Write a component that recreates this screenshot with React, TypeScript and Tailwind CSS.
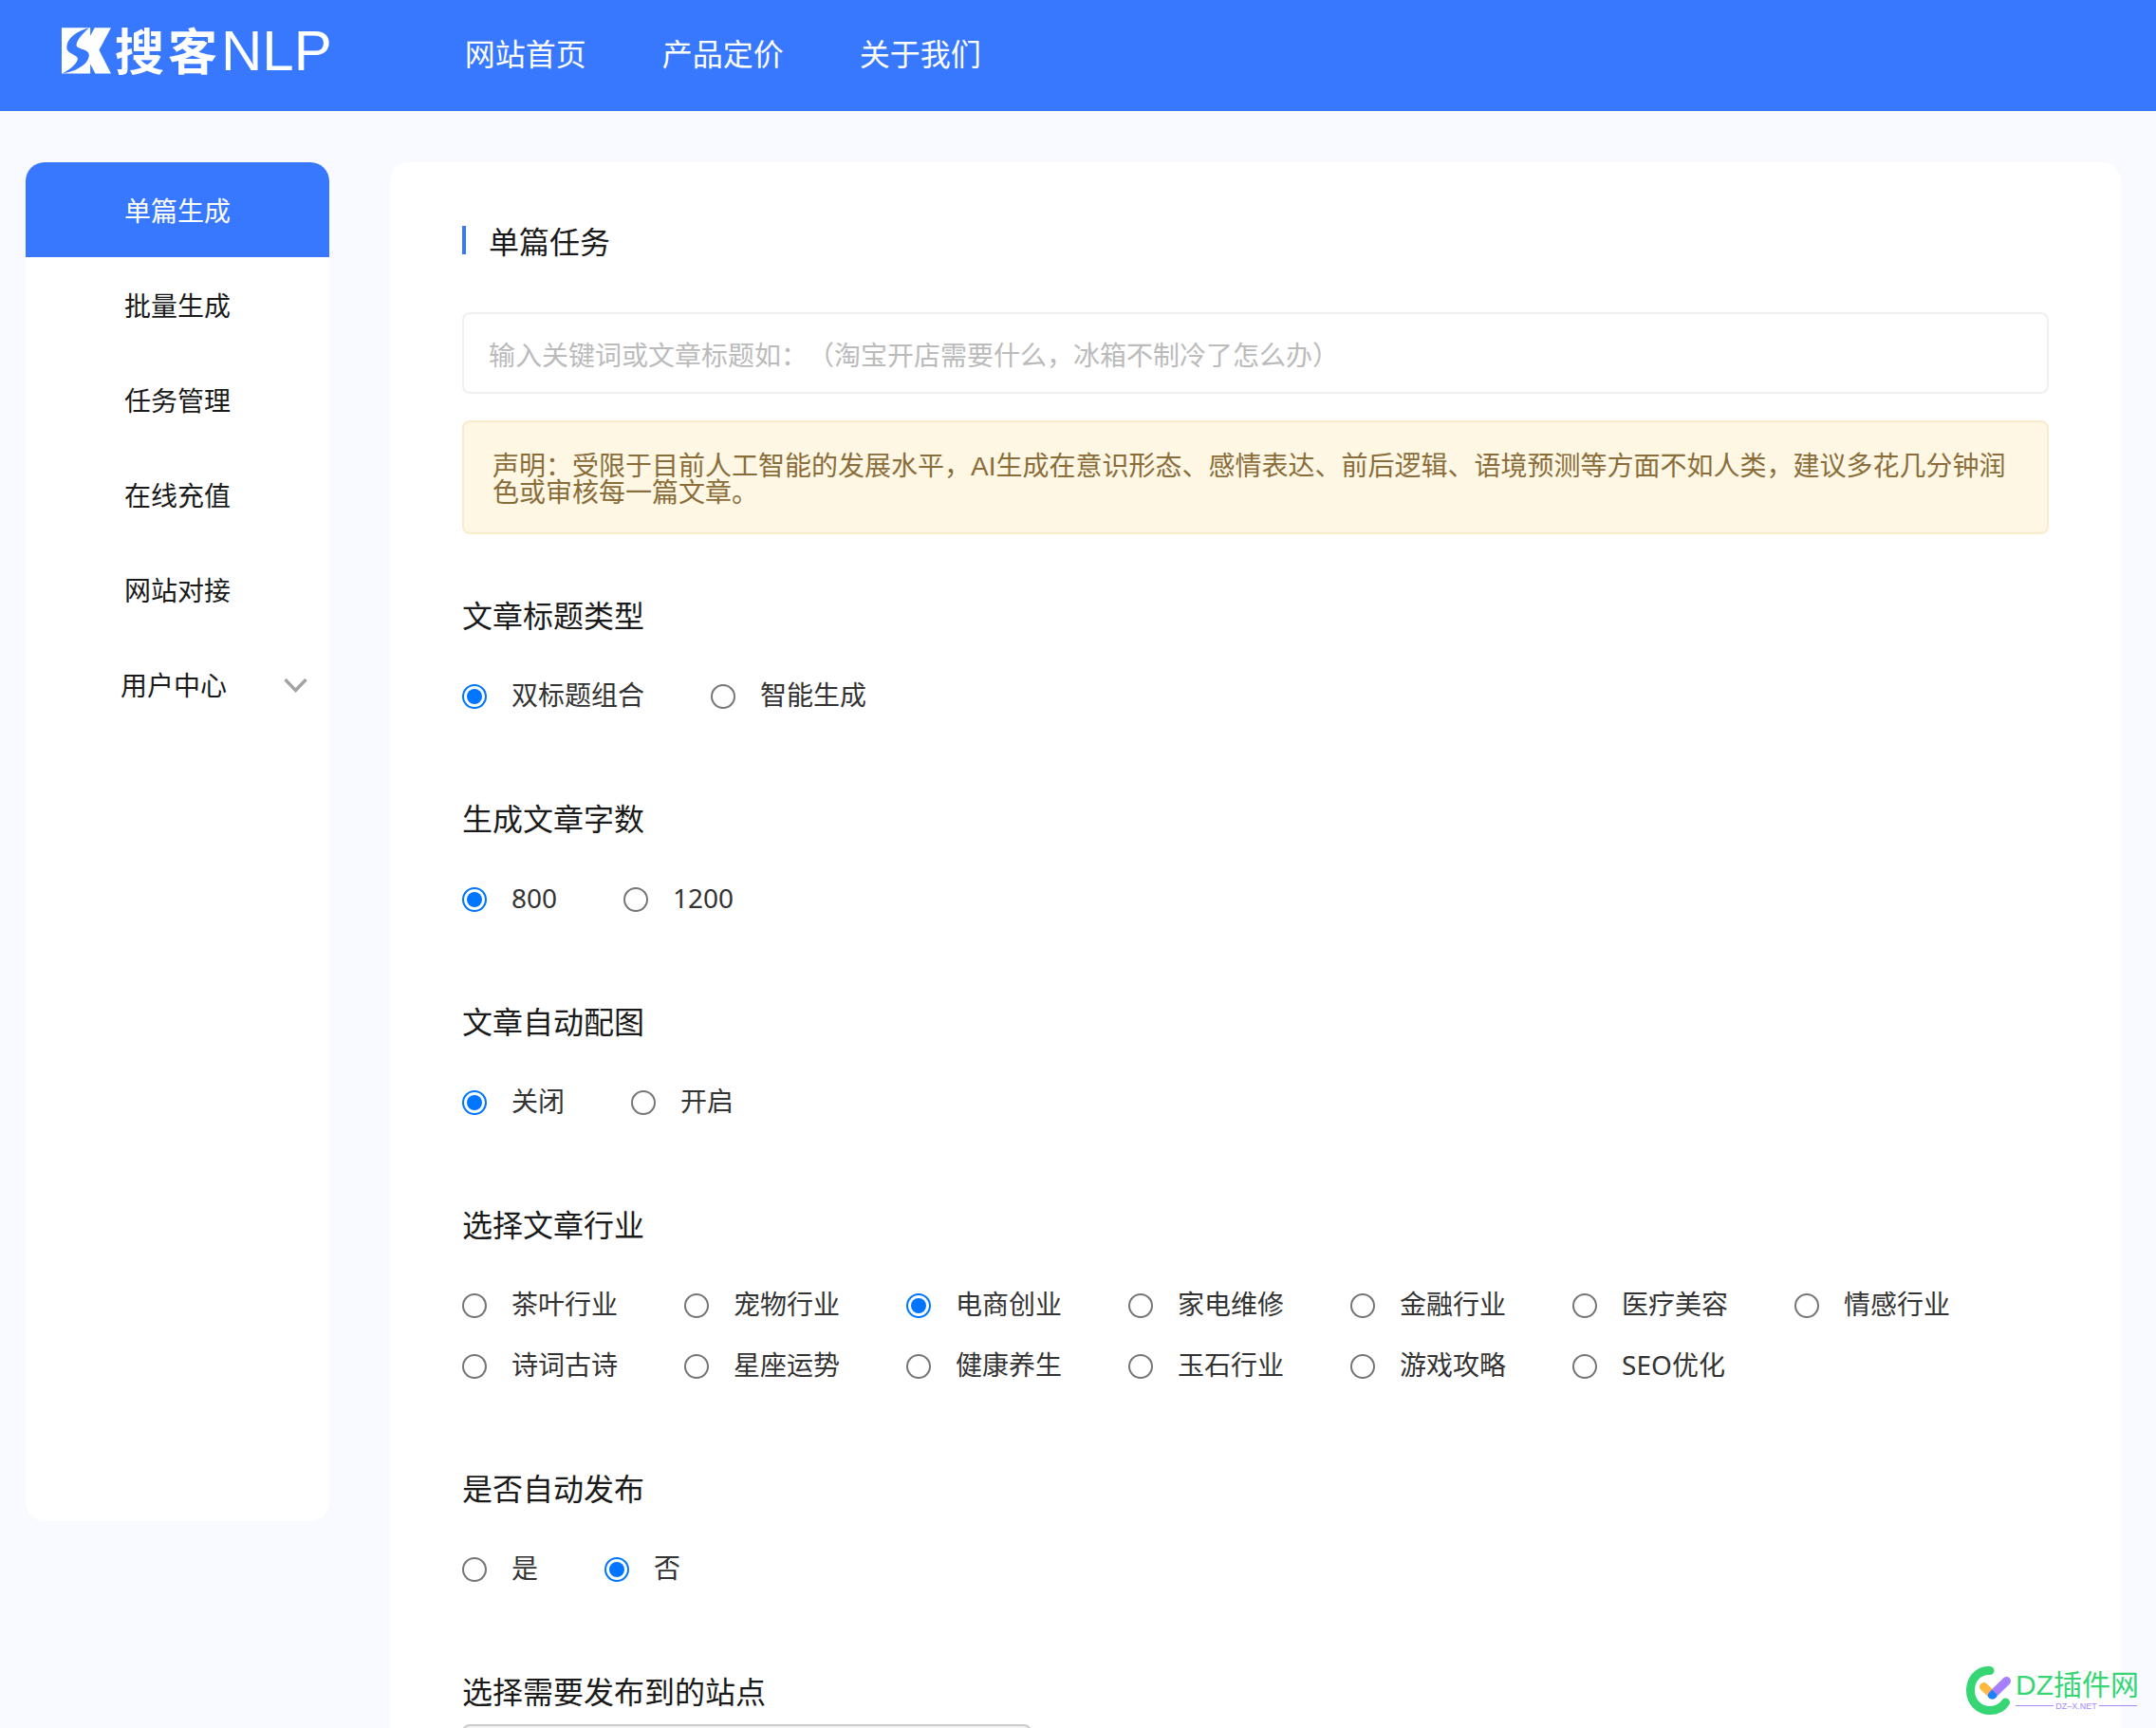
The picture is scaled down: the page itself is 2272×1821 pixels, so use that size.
import React, { FC, useState } from 'react';

interface RadioGroupProps {
    title: string;
    name: string;
    options: string[];
    defaultOption: string;
}

const navLinks = ['网站首页', '产品定价', '关于我们'];

const menuItems = ['单篇生成', '批量生成', '任务管理', '在线充值', '网站对接'];

const groups: RadioGroupProps[] = [
    { title: '文章标题类型', name: 'titleType', options: ['双标题组合', '智能生成'], defaultOption: '双标题组合' },
    { title: '生成文章字数', name: 'wordCount', options: ['800', '1200'], defaultOption: '800' },
    { title: '文章自动配图', name: 'autoImage', options: ['关闭', '开启'], defaultOption: '关闭' },
    {
        title: '选择文章行业',
        name: 'industry',
        options: [
            '茶叶行业', '宠物行业', '电商创业', '家电维修', '金融行业', '医疗美容', '情感行业',
            '诗词古诗', '星座运势', '健康养生', '玉石行业', '游戏攻略', 'SEO优化',
        ],
        defaultOption: '电商创业',
    },
    { title: '是否自动发布', name: 'autoPublish', options: ['是', '否'], defaultOption: '否' },
];

const Logo: FC = () => (
    <a href="#" className="mb-1.5 flex h-[49px] items-center text-white">
        <svg width="52" height="49" viewBox="0 0 157 147" className="shrink-0" aria-hidden="true">
            <path fill="#fff" d="M0 0H91V26L105 0H157L119 71L157 146H107L91 116V146H0Z" />
            <path
                fill="#3778ff"
                d="M87 0C50 10 17 32 16 62C16 84 52 86 51 99C50 116 22 134 3 146C42 140 86 118 87 88C88 66 48 70 47 56C46 40 68 18 87 0Z"
            />
        </svg>
        <span className="ml-1 flex gap-1 pb-1 font-['Noto_Sans_CJK_SC',sans-serif] text-[52px] leading-[48px] font-bold">
            <span>搜</span>
            <span>客</span>
        </span>
        <span className="ml-1 font-['Liberation_Sans',sans-serif] text-[60px] leading-[48px]">NLP</span>
    </a>
);

const Header: FC = () => (
    <header className="flex h-[117px] shrink-0 items-center bg-[#3778ff] pb-1 pl-[65px]">
        <Logo />
        <nav className="ml-[140px] flex gap-20">
            {navLinks.map((link) => (
                <a key={link} href="#" className="text-[32px] leading-10 text-white">
                    {link}
                </a>
            ))}
        </nav>
    </header>
);

const Sidebar: FC = () => {
    const [active, setActive] = useState<string>('单篇生成');

    return (
        <aside className="flex h-[1432px] w-[320px] shrink-0 flex-col overflow-hidden rounded-[20px] bg-white">
            {menuItems.map((item) => (
                <button
                    key={item}
                    onClick={() => setActive(item)}
                    className={`h-[100px] shrink-0 pt-0.5 text-[28px] leading-8 ${active === item ? 'bg-[#3778ff] text-white' : 'text-[#1a1a1a]'}`}
                >
                    {item}
                </button>
            ))}
            <button className="grid h-[100px] shrink-0 grid-cols-[1fr_auto_1fr] items-center pt-0.5 pr-[23px] pl-[15px] text-[28px] leading-8 text-[#1a1a1a]">
                <span className="col-start-2">用户中心</span>
                <svg width="25" height="15" viewBox="0 0 25 15" fill="none" className="justify-self-end" aria-hidden="true">
                    <path d="M1.5 1L12.5 12.5L23.5 1" stroke="#a3a3a3" strokeWidth="3.4" />
                </svg>
            </button>
        </aside>
    );
};

const RadioGroup: FC<RadioGroupProps> = ({ title, name, options, defaultOption }) => {
    const [value, setValue] = useState<string>(defaultOption);

    return (
        <fieldset className="mb-[95px]">
            <legend className="mb-[47px] text-[32px] leading-10 text-[#1a1a1a]">{title}</legend>
            <div className="flex flex-wrap gap-x-[70px] gap-y-8">
                {options.map((option) => (
                    <label key={option} className="flex items-center gap-[26px] text-[28px] leading-8 text-[#333]">
                        <input
                            type="radio"
                            name={name}
                            value={option}
                            checked={value === option}
                            onChange={() => setValue(option)}
                            className="mt-1 size-[26px] appearance-none rounded-full border-2 border-[#767676] bg-clip-content p-[3px] checked:border-[#0075ff] checked:bg-[#0075ff]"
                        />
                        {option}
                    </label>
                ))}
            </div>
        </fieldset>
    );
};

const Badge: FC = () => (
    <div className="absolute right-5 bottom-[14px] flex items-center gap-1">
        <svg width="48" height="51" viewBox="0 0 48 51" fill="none" strokeLinecap="round" aria-hidden="true">
            <path d="M25 4.5C12 4 4.500 14 4.500 25.500C4.500 38 14 46.500 25 46.500C32 46.500 38 43.500 41.500 38" stroke="#35d673" strokeWidth="9" />
            <path d="M18.500 21.500L27.500 30" stroke="#ffb93e" strokeWidth="9" />
            <path d="M42.500 15.500L27.500 30" stroke="#a67fff" strokeWidth="9" />
            <path d="M27.500 25L32 29.500C33 33 30 34.500 27.500 34.500C24 34.500 22 31.500 23 29.500Z" fill="#1684fc" />
        </svg>
        <div className="w-32">
            <div className="font-['Liberation_Sans','Noto_Sans_CJK_SC',sans-serif] text-[30px] leading-8 whitespace-nowrap text-[#35d673]">
                DZ插件网
            </div>
            <div className="flex items-center gap-[2px] font-['Liberation_Sans',sans-serif] text-[9px] leading-3 text-[#a687ff]">
                <span className="h-px flex-1 bg-[#a687ff]" />
                DZ–X.NET
                <span className="h-px flex-1 bg-[#a687ff]" />
            </div>
        </div>
    </div>
);

const App: FC = () => {
    const [keyword, setKeyword] = useState<string>('');

    return (
        <div className="relative flex h-screen flex-col overflow-hidden bg-[#f8faff] font-['Noto_Sans','Noto_Sans_CJK_SC',sans-serif] font-normal [text-spacing-trim:space-all]">
            <Header />
            <div className="flex items-start gap-16 pt-[54px] pr-[37px] pl-[27px]">
                <Sidebar />
                <main className="min-w-0 flex-1 rounded-[20px] bg-white px-[76px] pt-16 pb-20">
                    <div className="flex items-center gap-6">
                        <span className="mb-1 h-[30px] w-1 bg-[#3778ff]" />
                        <h1 className="text-[32px] leading-10 text-[#1a1a1a]">单篇任务</h1>
                    </div>
                    <input
                        type="text"
                        aria-label="关键词或文章标题"
                        placeholder="输入关键词或文章标题如：（淘宝开店需要什么，冰箱不制冷了怎么办）"
                        value={keyword}
                        onChange={(e) => setKeyword(e.target.value)}
                        className="mt-[54px] block h-[86px] w-full rounded-lg border-2 border-[#f0f0f0] px-[26px] pt-1 text-[28px] leading-8 text-[#333] [text-spacing-trim:space-all] placeholder:text-[#bbb]"
                    />
                    <p className="mt-7 mb-[66px] rounded-lg border-2 border-[#faebcc] bg-[#fdf7e3] px-[30px] pt-[33px] pb-[27px] font-['Liberation_Sans','Noto_Sans_CJK_SC',sans-serif] text-[28px] leading-7 text-[#8a6d3b]">
                        声明：受限于目前人工智能的发展水平，AI生成在意识形态、感情表达、前后逻辑、语境预测等方面不如人类，建议多花几分钟润色或审核每一篇文章。
                    </p>
                    {groups.map((group) => (
                        <RadioGroup key={group.name} {...group} />
                    ))}
                    <label htmlFor="site" className="block text-[32px] leading-10 text-[#1a1a1a]">
                        选择需要发布到的站点
                    </label>
                    <select
                        id="site"
                        className="mt-[14px] block h-20 w-[600px] rounded-lg border-2 border-[#ccc] bg-[#f2f2f2] px-6 text-[28px] text-[#333]"
                    />
                </main>
            </div>
            <Badge />
        </div>
    );
};

export default App;
